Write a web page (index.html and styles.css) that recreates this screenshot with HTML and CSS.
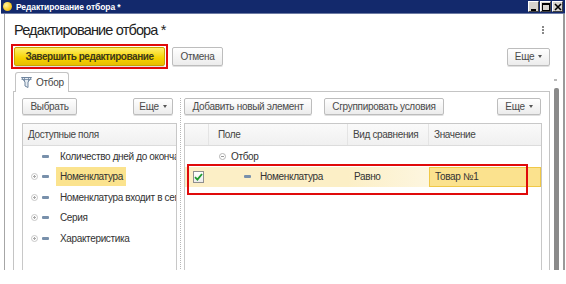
FILE: index.html
```html
<!DOCTYPE html>
<html lang="ru">
<head>
<meta charset="utf-8">
<title>Редактирование отбора</title>
<link rel="stylesheet" href="styles.css">
</head>
<body>
<div class="window">
  <div class="titlebar">
    <span class="ticon"></span>
    <span class="ttext">Редактирование отбора *</span>
    <div class="wbtns">
      <span class="wb"><svg width="8" height="8" viewBox="0 0 8 8"><rect x="1" y="6" width="5" height="2" fill="#000"/></svg></span>
      <span class="wb"><svg width="8" height="8" viewBox="0 0 8 8"><rect x="0.5" y="0.5" width="7" height="7" fill="none" stroke="#000"/><rect x="0" y="0" width="8" height="2" fill="#000"/></svg></span>
      <span class="wb"><svg width="8" height="8" viewBox="0 0 8 8"><path d="M1 1L7 7M7 1L1 7" stroke="#000" stroke-width="1.6"/></svg></span>
    </div>
  </div>
  <div class="frame">
    <div class="content">
      <div class="hdr">
        <h1 class="h1">Редактирование отбора *</h1>
        <span class="kebab"><i></i><i></i><i></i></span>
      </div>
      <div class="toolbar1">
        <span class="redframe"><button class="btn primary">Завершить редактирование</button></span>
        <button class="btn cancel">Отмена</button>
        <button class="btn more top">Еще <span class="caret"></span></button>
      </div>
      <div class="tabs">
        <div class="tab">
          <svg class="tabicon" width="11" height="11" viewBox="0 0 11 11">
            <path d="M0.5 0.5H10.5L7 5V10.5L4 9V5Z" fill="#e6ecf3" stroke="#6f859e"/>
            <path d="M3.5 0.5V4.5M7.5 0.5V4.5M0.5 2.5H10.5" stroke="#6f859e" stroke-width="0.8"/>
          </svg>
          <span>Отбор</span>
        </div>
      </div>
      <div class="tabpanel">
        <div class="colleft">
          <div class="toolbar2">
            <button class="btn b-choose">Выбрать</button>
            <button class="btn more left">Еще <span class="caret"></span></button>
          </div>
          <div class="panel lp">
            <div class="phead"><span class="ph-text">Доступные поля</span></div>
            <div class="lrow"><span class="pl none"></span><span class="dash"></span><span class="ltext">Количество дней до окончания срока годности</span></div>
            <div class="lrow"><span class="pl"></span><span class="dash"></span><span class="ltext sel">Номенклатура</span></div>
            <div class="lrow"><span class="pl"></span><span class="dash"></span><span class="ltext">Номенклатура входит в сегмент</span></div>
            <div class="lrow"><span class="pl"></span><span class="dash"></span><span class="ltext">Серия</span></div>
            <div class="lrow"><span class="pl"></span><span class="dash"></span><span class="ltext">Характеристика</span></div>
          </div>
        </div>
        <div class="splitter"></div>
        <div class="colright">
          <div class="toolbar2">
            <button class="btn b-add">Добавить новый элемент</button>
            <button class="btn b-group">Сгруппировать условия</button>
            <button class="btn more right">Еще <span class="caret"></span></button>
          </div>
          <div class="panel rp">
            <div class="rhead">
              <span class="c-chk"></span>
              <span class="c-field">Поле</span>
              <span class="c-cmp">Вид сравнения</span>
              <span class="c-val">Значение</span>
            </div>
            <div class="rrow group">
              <span class="c-chk"></span>
              <span class="c-field"><span class="minus"></span>Отбор</span>
            </div>
            <div class="rrow item">
              <span class="c-chk"><span class="chk"><svg width="9" height="8" viewBox="0 0 9 8"><path d="M1 4.2L3.4 6.6L8 1" fill="none" stroke="#1f9a2e" stroke-width="1.8"/></svg></span></span>
              <span class="c-field"><span class="dash"></span>Номенклатура</span>
              <span class="c-cmp">Равно</span>
              <span class="c-val v">Товар №1</span>
            </div>
            <span class="redrow"></span>
          </div>
        </div>
      </div>
    </div>
    <div class="vscroll"><span class="arrow"></span><span class="thumb"></span></div>
    <div class="rborder"></div>
  </div>
</div>
</body>
</html>
```
FILE: styles.css
```css
* { box-sizing: border-box; }
html, body { margin: 0; padding: 0; }
body {
  width: 566px;
  height: 284px;
  overflow: hidden;
  background: #fff;
  font-family: "Liberation Sans", Arial, sans-serif;
  color: #333;
}
.window {
  height: 270px;
  display: flex;
  flex-direction: column;
  overflow: hidden;
}
.titlebar {
  height: 14px;
  margin: 0 1px 0 1px;
  background: #13296c;
  border-bottom: 1px solid #6c7aa3;
  display: flex;
  align-items: center;
  padding-left: 2px;
}
.ticon {
  width: 9px;
  height: 9px;
  border-radius: 50%;
  background: radial-gradient(circle at 35% 35%, #fff2a0 0%, #f7cc2a 55%, #d99a00 100%);
}
.ttext {
  color: #fff;
  font-weight: bold;
  font-size: 8.5px;
  letter-spacing: -0.1px;
  margin-left: 4px;
}
.wbtns {
  margin-left: auto;
  display: flex;
  gap: 1px;
  margin-right: 2px;
}
.wb {
  width: 11px;
  height: 11px;
  background: #d6d3ce;
  border: 1px solid;
  border-color: #fff #404040 #404040 #fff;
  display: flex;
  align-items: center;
  justify-content: center;
}
.wb svg { display: block; }
.frame {
  flex: 1;
  display: flex;
  margin-left: 4px;
  border-left: 1px solid #a6a6a6;
  min-height: 0;
}
.content {
  width: 546px;
  padding-left: 8px;
  padding-right: 1px;
  display: flex;
  flex-direction: column;
  min-height: 0;
}
.hdr {
  height: 30px;
  display: flex;
  align-items: center;
  padding-top: 2px;
}
.h1 {
  margin: 0 0 0 1px;
  font-weight: normal;
  font-size: 14.5px;
  letter-spacing: -0.85px;
  color: #222;
}
.kebab {
  margin-left: auto;
  margin-right: 6px;
  display: flex;
  flex-direction: column;
  gap: 1px;
}
.kebab i {
  width: 2px;
  height: 2px;
  background: #888;
  display: block;
}
.toolbar1 {
  height: 25px;
  display: flex;
  align-items: center;
}
.btn {
  font-family: "Liberation Sans", Arial, sans-serif;
  font-size: 10px;
  letter-spacing: -0.3px;
  color: #4a4a4a;
  background: linear-gradient(#ffffff, #ececec);
  border: 1px solid #bdbdbd;
  border-radius: 2px;
  padding: 0;
  display: flex;
  align-items: center;
  justify-content: center;
  box-shadow: 0 1px 0 #e0e0e0;
}
.redframe {
  margin-left: -2px;
  border: 2px solid #e00a0a;
  padding: 1px;
  display: flex;
}
.primary {
  width: 151px;
  height: 19px;
  background: linear-gradient(#fff06a, #f6d200 60%, #e8be00);
  border-color: #c9a400;
  font-weight: bold;
  color: #3d3a1a;
  letter-spacing: -0.45px;
}
.cancel {
  width: 51px;
  height: 19px;
  margin-left: 4px;
}
.more {
  height: 18px;
  gap: 4px;
}
.more.top { width: 43px; margin-left: auto; }
.caret {
  width: 0;
  height: 0;
  border-left: 2.5px solid transparent;
  border-right: 2.5px solid transparent;
  border-top: 3px solid #555;
}
.tabs {
  display: flex;
  margin-top: 3px;
  padding-left: 2px;
  position: relative;
  z-index: 1;
}
.tab {
  width: 54px;
  height: 20px;
  border: 1px solid #c4c4c4;
  border-bottom: none;
  border-radius: 3px 3px 0 0;
  background: #fff;
  display: flex;
  align-items: center;
  padding-left: 5px;
  gap: 4px;
  font-size: 10px;
  letter-spacing: -0.3px;
  color: #444;
}
.tabicon { display: block; }
.tabpanel {
  flex: 1;
  min-height: 0;
  margin-top: -1px;
  border: 1px solid #c4c4c4;
  border-bottom: none;
  display: flex;
  padding: 6px 7px 0 8px;
}
.colleft {
  width: 155px;
  display: flex;
  flex-direction: column;
}
.colright {
  width: 358px;
  display: flex;
  flex-direction: column;
}
.splitter {
  width: 7px;
  background-image: linear-gradient(#b8b8b8 50%, transparent 50%);
  background-size: 1px 2px;
  background-repeat: repeat-y;
  background-position: 3px 0;
}
.toolbar2 {
  height: 17px;
  display: flex;
  align-items: stretch;
  margin-bottom: 8px;
}
.toolbar2 .btn { height: 17px; }
.b-choose { width: 55px; }
.more.left { width: 40px; margin-left: auto; margin-right: 4px; }
.b-add { width: 128px; }
.b-group { width: 120px; margin-left: 12px; }
.more.right { width: 44px; margin-left: auto; margin-right: 1px; }
.panel {
  flex: 1;
  border: 1px solid #c8c8c8;
  border-bottom: none;
  overflow: hidden;
  position: relative;
  font-size: 10px;
  letter-spacing: -0.35px;
}
.phead {
  height: 22px;
  background: linear-gradient(#fafafa, #f0f0f0);
  border-bottom: 1px solid #dcdcdc;
  display: flex;
  align-items: center;
  padding-left: 5px;
  color: #444;
}
.lrow {
  height: 20.5px;
  display: flex;
  align-items: center;
  white-space: nowrap;
}
.pl {
  width: 7px;
  height: 7px;
  margin-left: 8px;
  border: 1px solid #c8c8c8;
  border-radius: 50%;
  position: relative;
  flex: none;
}
.pl::before, .pl::after {
  content: "";
  position: absolute;
  background: #a8a8a8;
}
.pl::before { left: 1px; top: 2px; width: 3px; height: 1px; }
.pl::after { left: 2px; top: 1px; width: 1px; height: 3px; }
.pl.none { border-color: transparent; }
.pl.none::before, .pl.none::after { display: none; }
.dash {
  width: 7px;
  height: 3px;
  border-radius: 1px;
  background: #7890ab;
  flex: none;
}
.lrow .dash { margin-left: 4px; }
.ltext {
  margin-left: 9px;
  padding: 0 2px;
  height: 19px;
  display: flex;
  align-items: center;
  color: #333;
}
.ltext.sel {
  background: #fbe38e;
  margin-left: 7px;
  padding: 0 3px 0 4px;
}
.rhead {
  height: 22px;
  background: linear-gradient(#fafafa, #f0f0f0);
  border-bottom: 1px solid #dcdcdc;
  display: flex;
  color: #444;
}
.rhead > span, .rrow > span {
  display: flex;
  align-items: center;
  flex: none;
}
.c-chk { width: 24px; }
.c-field { width: 139px; }
.c-cmp { width: 81px; }
.c-val { width: 112px; }
.rhead .c-chk { border-right: 1px solid #e4e4e4; }
.rhead .c-field { padding-left: 9px; border-right: 1px solid #e4e4e4; }
.rhead .c-cmp { padding-left: 5px; border-right: 1px solid #e4e4e4; }
.rhead .c-val { padding-left: 5px; }
.rrow {
  display: flex;
  white-space: nowrap;
  color: #333;
}
.rrow.group { height: 20.5px; }
.rrow.group .c-field { padding-left: 10px; }
.minus {
  width: 7px;
  height: 7px;
  border: 1px solid #b4b4b4;
  border-radius: 50%;
  position: relative;
  margin-right: 5px;
}
.minus::before {
  content: "";
  position: absolute;
  left: 1px;
  top: 2px;
  width: 3px;
  height: 1px;
  background: #999;
}
.rrow.item {
  height: 20px;
  background: linear-gradient(90deg, #fcefc6 0%, #fcefc6 60%, #fdf3d6 100%);
}
.rrow.item .c-chk { justify-content: flex-end; padding-right: 5px; }
.chk {
  width: 11px;
  height: 12px;
  border: 1px solid #8f8f8f;
  background: linear-gradient(#ffffff, #ececec);
  display: flex;
  align-items: center;
  justify-content: center;
}
.chk svg { display: block; }
.rrow.item .c-field { padding-left: 35px; }
.rrow.item .c-field .dash { margin-right: 9px; }
.rrow.item .c-cmp { padding-left: 6px; background: linear-gradient(90deg, #fcefc6, #fdf6e0); }
.c-val.v {
  background: #fbe28e;
  border: 1px solid #f0c847;
  padding-left: 5px;
}
.redrow {
  position: absolute;
  left: 2px;
  top: 40px;
  width: 341px;
  height: 31px;
  border: 2px solid #e00a0a;
}
.vscroll {
  width: 10px;
  position: relative;
}
.arrow {
  position: absolute;
  left: 3px;
  top: 65px;
  width: 3px;
  height: 2px;
  background: #bbb;
}
.thumb {
  position: absolute;
  left: 3px;
  top: 74px;
  bottom: 0;
  width: 5px;
  border-radius: 2px 2px 0 0;
  background: #8a8a8a;
}
.rborder {
  width: 2px;
  margin-left: 2px;
  background: #9a9a9a;
}
```
